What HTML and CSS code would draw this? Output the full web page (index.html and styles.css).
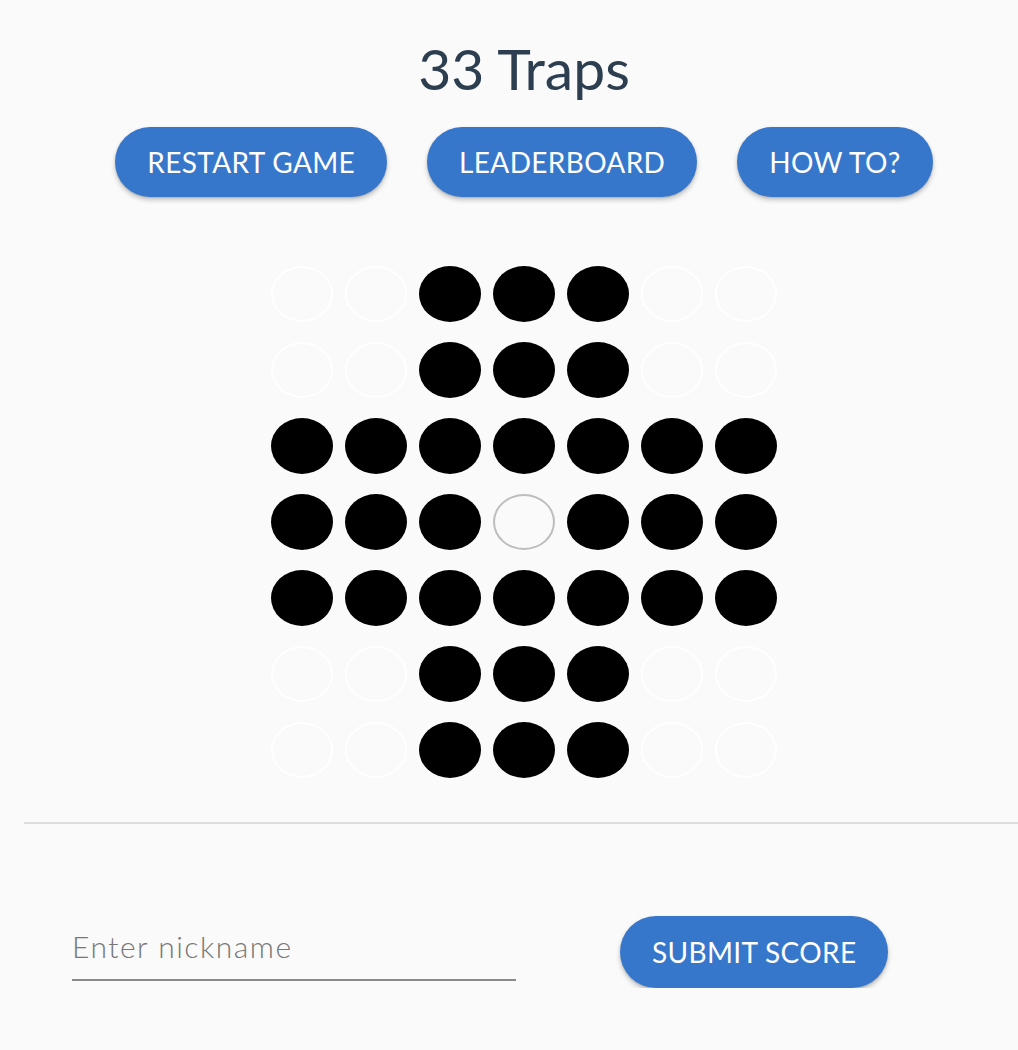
FILE: index.html
```html
<!DOCTYPE html>
<html lang="en">
<head>
<meta charset="utf-8">
<title>33 Traps</title>
<link rel="stylesheet" href="styles.css">
</head>
<body>
<div class="app">
  <h1 class="title">33 Traps</h1>
  <div class="actions">
    <button class="btn">RESTART GAME</button>
    <button class="btn">LEADERBOARD</button>
    <button class="btn">HOW TO?</button>
  </div>
  <div class="board">
    <span class="cell off"></span><span class="cell off"></span><span class="cell peg"></span><span class="cell peg"></span><span class="cell peg"></span><span class="cell off"></span><span class="cell off"></span>
    <span class="cell off"></span><span class="cell off"></span><span class="cell peg"></span><span class="cell peg"></span><span class="cell peg"></span><span class="cell off"></span><span class="cell off"></span>
    <span class="cell peg"></span><span class="cell peg"></span><span class="cell peg"></span><span class="cell peg"></span><span class="cell peg"></span><span class="cell peg"></span><span class="cell peg"></span>
    <span class="cell peg"></span><span class="cell peg"></span><span class="cell peg"></span><span class="cell hole"></span><span class="cell peg"></span><span class="cell peg"></span><span class="cell peg"></span>
    <span class="cell peg"></span><span class="cell peg"></span><span class="cell peg"></span><span class="cell peg"></span><span class="cell peg"></span><span class="cell peg"></span><span class="cell peg"></span>
    <span class="cell off"></span><span class="cell off"></span><span class="cell peg"></span><span class="cell peg"></span><span class="cell peg"></span><span class="cell off"></span><span class="cell off"></span>
    <span class="cell off"></span><span class="cell off"></span><span class="cell peg"></span><span class="cell peg"></span><span class="cell peg"></span><span class="cell off"></span><span class="cell off"></span>
  </div>
  <hr class="divider">
  <div class="submit-row">
    <input class="nickname" type="text" placeholder="Enter nickname">
    <button class="btn">SUBMIT SCORE</button>
  </div>
</div>
</body>
</html>
```

FILE: styles.css
```css
html, body {
  margin: 0;
  padding: 0;
  background: #fafafa;
  overflow: hidden;
}

.app {
  width: 1000px;
  margin-left: 24px;
  font-family: Lato, "Open Sans", sans-serif;
  color: #2c3e50;
  text-align: center;
}

.title {
  margin: 40px 0 0;
  font-size: 57px;
  line-height: 57px;
  font-weight: 400;
}

.actions {
  display: flex;
  justify-content: center;
  gap: 40px;
  margin-top: 30px;
}

.btn {
  height: 70px;
  padding: 0 32px;
  border: none;
  border-radius: 35px;
  background: #3777cb;
  color: #fff;
  font-family: Lato, "Open Sans", sans-serif;
  font-size: 28px;
  font-weight: 400;
  letter-spacing: 0.35px;
  box-shadow: 0 3px 5px rgba(0, 0, 0, 0.22), 0 1px 2px rgba(0, 0, 0, 0.12);
  cursor: pointer;
}

.board {
  display: grid;
  grid-template-columns: repeat(7, 62px);
  grid-auto-rows: 56px;
  column-gap: 12px;
  row-gap: 20px;
  justify-content: center;
  margin-top: 69px;
}

.cell {
  display: block;
  border-radius: 50%;
  box-sizing: border-box;
}

.peg {
  background: #000;
}

.hole {
  border: 2px solid #bdbdbd;
  background: #fafafa;
}

.off {
  border: 2px solid #fff;
}

.divider {
  margin: 44px 0 0;
  border: none;
  height: 2px;
  background: #dddddd;
}

.submit-row {
  display: flex;
  align-items: flex-start;
  gap: 104px;
  margin-top: 92px;
  padding-left: 48px;
}

.submit-row .btn {
  height: 72px;
  border-radius: 36px;
}

.nickname {
  width: 444px;
  height: 36px;
  margin-top: 12px;
  padding: 0 0 15px 0;
  box-sizing: content-box;
  border: none;
  border-bottom: 2px solid #8a8a8a;
  background: transparent;
  font-family: Lato, "Open Sans", sans-serif;
  font-size: 30px;
  font-weight: 300;
  letter-spacing: 1.5px;
  color: #2c3e50;
  outline: none;
}

.nickname::placeholder {
  color: #777;
}
```
